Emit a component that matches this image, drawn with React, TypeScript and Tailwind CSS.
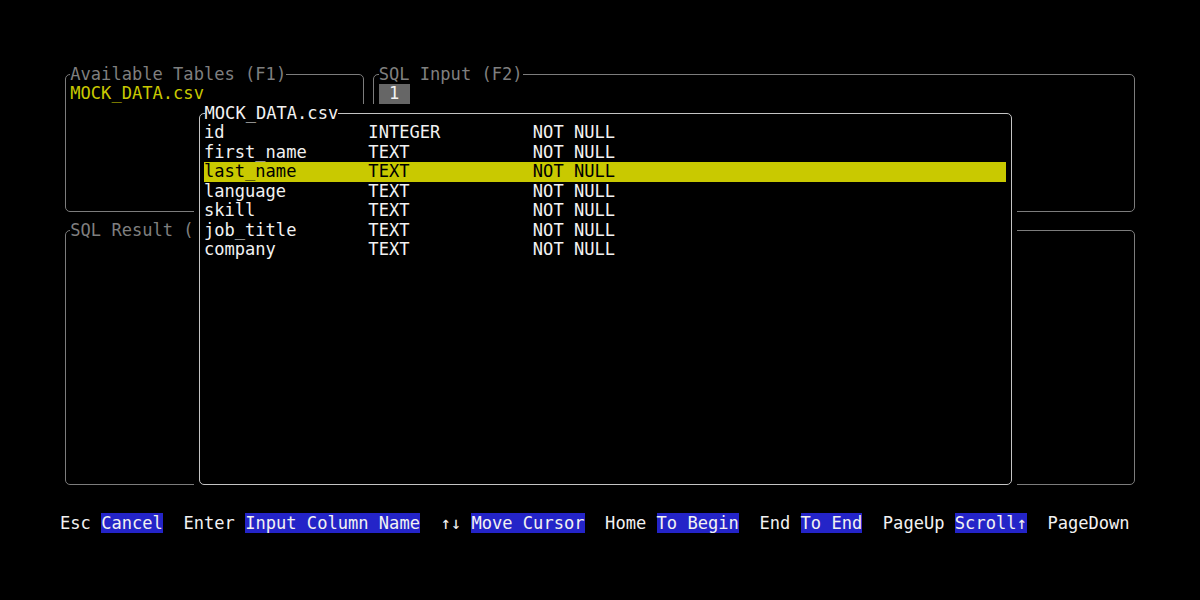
import React from 'react';

// terminal cell metrics
// char width 10.28px, row height 19.54px

const columns = [
  { name: 'id', type: 'INTEGER', constraint: 'NOT NULL' },
  { name: 'first_name', type: 'TEXT', constraint: 'NOT NULL' },
  { name: 'last_name', type: 'TEXT', constraint: 'NOT NULL' },
  { name: 'language', type: 'TEXT', constraint: 'NOT NULL' },
  { name: 'skill', type: 'TEXT', constraint: 'NOT NULL' },
  { name: 'job_title', type: 'TEXT', constraint: 'NOT NULL' },
  { name: 'company', type: 'TEXT', constraint: 'NOT NULL' },
];

const keys = [
  { key: 'Esc', label: 'Cancel' },
  { key: 'Enter', label: 'Input Column Name' },
  { key: '↑↓', label: 'Move Cursor' },
  { key: 'Home', label: 'To Begin' },
  { key: 'End', label: 'To End' },
  { key: 'PageUp', label: 'Scroll↑' },
  { key: 'PageDown', label: '' },
];

interface PanelProps {
  title: string;
  className?: string;
  borderClass?: string;
  titleClass?: string;
  children?: React.ReactNode;
}

const Panel: React.FC<PanelProps> = ({ title, className = '', borderClass = 'border-[#7c7c7c]', titleClass = 'text-[#7f7f7f]', children }) => {
  return (
    <div className={`px-[4.64px] py-[9.27px] ${className}`}>
      <div className={`h-full border rounded-[5px] ${borderClass}`}>
        <div className="-mt-[10.27px] ml-[4.64px] h-[19.54px] flex">
          <span className={`bg-black whitespace-pre ${titleClass}`}>{title}</span>
        </div>
        <div className="ml-[4.64px]">{children}</div>
      </div>
    </div>
  );
};

const App: React.FC = () => {
  return (
    <div className="w-[1200px] h-[600px] bg-black overflow-hidden pl-[60px] pt-[64.5px] font-['DejaVu_Sans_Mono',monospace] text-[17.08px] leading-[19.54px] text-[#f2f2f2]">
      <div className="relative w-[1079.4px]">
        <div className="flex h-[156.32px]">
          <Panel title="Available Tables (F1)" className="w-[308.4px] h-full">
            <div className="h-[19.54px] text-[#c9c900]">MOCK_DATA.csv</div>
          </Panel>
          <Panel title="SQL Input (F2)" className="w-[771px] h-full">
            <div className="h-[19.54px] flex">
              <span className="bg-[#666666] text-[#f2f2f2] whitespace-pre">{' 1 '}</span>
            </div>
          </Panel>
        </div>

        <Panel title="SQL Result (F3)" className="h-[273.56px]" />

        <div className="h-[19.54px]" />

        <div className="h-[19.54px] flex whitespace-pre">
          {keys.map((k, i) => (
            <span key={k.key} className="whitespace-pre">
              {i > 0 ? '  ' : ''}
              {k.key}
              {k.label && (
                <>
                  {' '}
                  <span className="bg-[#2424c8] text-[#f2f2f2]">{k.label}</span>
                </>
              )}
            </span>
          ))}
        </div>

        {/* column popup */}
        <Panel
          title="MOCK_DATA.csv"
          className="absolute left-[134.3px] top-[39.08px] w-[822.4px] h-[390.8px] bg-black"
          borderClass="border-[#c4c4c4]"
          titleClass="text-[#f2f2f2]"
        >
          <div className="-ml-[0.66px]">
            {columns.map(col => (
              <div
                key={col.name}
                className={`flex w-[801.84px] h-[19.54px] whitespace-pre ${
                  col.name === 'last_name' ? 'bg-[#c9c900] text-black' : ''
                }`}
              >
                <span className="w-[164.48px]">{col.name}</span>
                <span className="w-[164.48px]">{col.type}</span>
                <span>{col.constraint}</span>
              </div>
            ))}
          </div>
        </Panel>
      </div>
    </div>
  );
};

export default App;
